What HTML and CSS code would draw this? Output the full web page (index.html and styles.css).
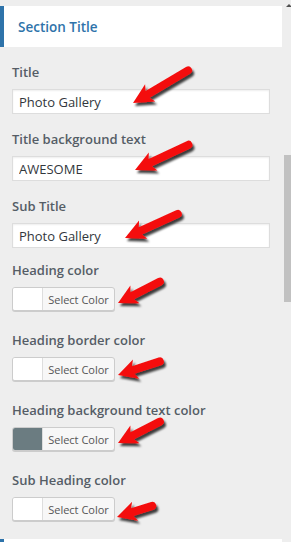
FILE: index.html
```html
<!DOCTYPE html>
<html lang="en">
<head>
  <meta charset="UTF-8" />
  <title>Section Title</title>
  <link rel="stylesheet" href="styles.css">
</head>
<body>
  <div class="frame">
    <div class="panel">
      <div class="section-head">Section Title</div>

      <div class="fields">
        <div class="group text-group">
          <div class="field">
            <label class="field-label">Title</label>
            <input class="text-input" type="text" value="Photo Gallery">
          </div>
          <div class="field">
            <label class="field-label">Title background text</label>
            <input class="text-input" type="text" value="AWESOME">
          </div>
          <div class="field">
            <label class="field-label">Sub Title</label>
            <input class="text-input" type="text" value="Photo Gallery">
          </div>
        </div>

        <div class="group color-group">
          <div class="field">
            <label class="field-label">Heading color</label>
            <button class="color-btn"><span class="swatch"></span><span class="btn-text">Select Color</span></button>
          </div>
          <div class="field">
            <label class="field-label">Heading border color</label>
            <button class="color-btn"><span class="swatch"></span><span class="btn-text">Select Color</span></button>
          </div>
          <div class="field">
            <label class="field-label">Heading background text color</label>
            <button class="color-btn"><span class="swatch swatch-slate"></span><span class="btn-text">Select Color</span></button>
          </div>
          <div class="field">
            <label class="field-label">Sub Heading color</label>
            <button class="color-btn"><span class="swatch"></span><span class="btn-text">Select Color</span></button>
          </div>
        </div>
      </div>

      <div class="section-head next-head"></div>
    </div>

    <!-- fake scrollbar -->
    <div class="scrollbar">
      <span class="scroll-up"></span>
      <span class="scroll-thumb"></span>
    </div>
  </div>

  <!-- red annotation arrows laid over the form -->
  <svg class="arrows" width="291" height="542" viewBox="0 0 291 542">
    <defs>
      <filter id="shade" x="-20%" y="-40%" width="150%" height="190%">
        <feDropShadow dx="2" dy="3" stdDeviation="1.3" flood-color="#000" flood-opacity="0.75"/>
      </filter>
    </defs>
    <g fill="#f40f0f" filter="url(#shade)">
      <path transform="translate(133 103) rotate(-30.7)" d="M0,0 L20,-10 L17,-4 L64,-4 A4,4 0 0 1 64,4 L17,4 L20,10 Z"/>
      <path transform="translate(135 170) rotate(-25.3)" d="M0,0 L20,-10 L17,-4 L59,-4 A4,4 0 0 1 59,4 L17,4 L20,10 Z"/>
      <path transform="translate(125 238) rotate(-24.5)" d="M0,0 L20,-10 L17,-4 L58,-4 A4,4 0 0 1 58,4 L17,4 L20,10 Z"/>
      <path transform="translate(118 303) rotate(-27)" d="M0,0 L19,-10 L16,-4 L47,-4 A4,4 0 0 1 47,4 L16,4 L19,10 Z"/>
      <path transform="translate(118 375) rotate(-18)" d="M0,0 L19,-10 L16,-4 L44,-4 A4,4 0 0 1 44,4 L16,4 L19,10 Z"/>
      <path transform="translate(118 443) rotate(-27)" d="M0,0 L19,-10 L16,-4 L47,-4 A4,4 0 0 1 47,4 L16,4 L19,10 Z"/>
      <path transform="translate(117 517) rotate(-17.5)" d="M0,0 L19,-10 L16,-4 L37,-4 A4,4 0 0 1 37,4 L16,4 L19,10 Z"/>
    </g>
  </svg>
</body>
</html>
```

FILE: styles.css
```css
/* Base */
*, *::before, *::after {
  box-sizing: border-box;
}
html, body {
  height: 542px;
  overflow: hidden;
}
body {
  margin: 0;
  background: #eeeeee;
  font-family: 'Open Sans', 'Noto Sans', sans-serif;
  color: #555d66;
  position: relative;
}

.frame {
  display: flex;
  height: 542px;
  overflow: hidden;
}

/* Customizer panel */
.panel {
  width: 282px;
  height: 542px;
  padding-top: 6px;
  overflow: hidden;
}
.section-head {
  height: 41px;
  background: #fff;
  border-left: 4px solid #2e73aa;
  padding-left: 14px;
  display: flex;
  align-items: center;
  font-size: 13.5px;
  font-weight: 600;
  color: #2e73aa;
}
.next-head {
  margin-top: 18px;
}

.fields {
  padding: 16px 12px 0;
  display: flex;
  flex-direction: column;
  gap: 13px;
}
.group {
  display: flex;
  flex-direction: column;
}
.text-group {
  gap: 16px;
}
.color-group {
  gap: 20px;
}
.field {
  display: flex;
  flex-direction: column;
  align-items: flex-start;
}
.field-label {
  font-size: 13px;
  font-weight: 600;
  line-height: 18px;
  margin-bottom: 8px;
  color: #555d66;
}

/* Text input */
.text-input {
  width: 258px;
  height: 25px;
  margin: 0;
  padding: 0 6px;
  border: 1px solid #dddddd;
  background: #fff;
  box-shadow: inset 0 1px 2px rgba(0, 0, 0, 0.07);
  font-family: inherit;
  font-size: 13px;
  color: #32373c;
  outline: none;
}

/* Color picker button */
.color-btn {
  display: flex;
  align-items: stretch;
  width: 103px;
  height: 24px;
  margin: 0;
  padding: 0;
  border: 1px solid #cccccc;
  border-radius: 3px;
  background: #f7f7f7;
  box-shadow: 0 1px 0 #cccccc;
  overflow: hidden;
  font-family: inherit;
  cursor: pointer;
}
.swatch {
  width: 30px;
  background: #fff;
  border-right: 1px solid #dddddd;
}
.swatch-slate {
  background: #6b7c81;
}
.btn-text {
  flex: 1;
  display: flex;
  align-items: center;
  justify-content: center;
  font-size: 11px;
  color: #555555;
}

/* Scrollbar */
.scrollbar {
  width: 9px;
  padding-left: 2px;
  display: flex;
  flex-direction: column;
}
.scroll-up {
  width: 0;
  height: 0;
  margin: 4px 0 0 2px;
  border-left: 3px solid transparent;
  border-right: 3px solid transparent;
  border-bottom: 3px solid #505050;
}
.scroll-thumb {
  margin-top: 148px;
  width: 7px;
  height: 147px;
  background: #c1c1c1;
}

/* Annotation overlay */
.arrows {
  position: absolute;
  top: 0;
  left: 0;
  pointer-events: none;
}
```
